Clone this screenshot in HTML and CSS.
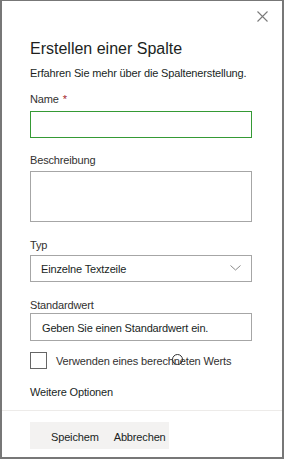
FILE: index.html
```html
<!DOCTYPE html>
<html lang="de">

<head>
    <meta charset="UTF-8">
    <meta name="viewport" content="width=device-width, initial-scale=1.0">
    <title>Erstellen einer Spalte</title>

    <link rel="stylesheet" href="styles.css">
</head>

<body>
    <div class="panel">
        <div class="panel-header">
            <button class="close" aria-label="Schließen">
                <svg width="11" height="11" viewBox="0 0 11 11">
                    <path d="M0.5 0.5 L10.5 10.5 M10.5 0.5 L0.5 10.5" stroke="#7a7a7a" stroke-width="1.1" fill="none" />
                </svg>
            </button>
        </div>

        <div class="panel-body">
            <h1 class="title">Erstellen einer Spalte</h1>
            <p class="intro">Erfahren Sie mehr über die Spaltenerstellung.</p>

            <!-- Name -->
            <label class="field-label label-name">Name <span class="required">*</span></label>
            <div class="input input-focus"></div>

            <!-- Beschreibung -->
            <label class="field-label label-desc">Beschreibung</label>
            <div class="textarea"></div>

            <!-- Typ -->
            <label class="field-label label-type">Typ</label>
            <div class="select">
                <span>Einzelne Textzeile</span>
                <svg width="11" height="6" viewBox="0 0 11 6">
                    <path d="M0.5 0.5 L5.5 5 L10.5 0.5" stroke="#8a8a8a" stroke-width="1" fill="none" />
                </svg>
            </div>

            <!-- Standardwert -->
            <label class="field-label label-default">Standardwert</label>
            <div class="input input-default">Geben Sie einen Standardwert ein.</div>

            <div class="checkbox-row">
                <span class="checkbox"></span>
                <span class="checkbox-text">Verwenden eines berechneten Werts</span>
                <span class="cursor"></span>
            </div>

            <div class="more">Weitere Optionen</div>
        </div>

        <div class="panel-footer">
            <div class="buttons">
                <button class="btn">Speichem</button>
                <button class="btn">Abbrechen</button>
            </div>
        </div>
    </div>
</body>

</html>
```

FILE: styles.css
```css
* {
    box-sizing: border-box;
}

body {
    margin: 0;
    font-family: "Liberation Sans", Arial, sans-serif;
    color: #323130;
    background: #fff;
}

.panel {
    width: 284px;
    height: 459px;
    border: 2px solid #777;
    border-top-width: 1px;
    display: flex;
    flex-direction: column;
}

.panel-header {
    display: flex;
    justify-content: flex-end;
    padding: 10px 14px 0 0;
    height: 30px;
    flex: none;
}

.close {
    appearance: none;
    border: none;
    background: none;
    padding: 0;
    width: 11px;
    height: 11px;
    cursor: pointer;
}

.close svg {
    display: block;
}

.panel-body {
    padding: 0 30px 0 28px;
    height: 379px;
    flex: none;
}

.title {
    margin: 0;
    padding-top: 8px;
    font-size: 16px;
    font-weight: normal;
    line-height: 20px;
    color: #201f1e;
}

.intro {
    margin: 7px 0 0;
    font-size: 11px;
    line-height: 14px;
    letter-spacing: -0.15px;
    color: #201f1e;
    white-space: nowrap;
}

.field-label {
    display: block;
    font-size: 11px;
    line-height: 14px;
    letter-spacing: -0.15px;
}

.label-name {
    margin-top: 12px;
    margin-bottom: 5px;
}

.required {
    color: #a4262c;
    margin-left: 1px;
}

.label-desc {
    margin-top: 15px;
    margin-bottom: 4px;
}

.label-type {
    margin-top: 16px;
    margin-bottom: 3px;
}

.label-default {
    margin-top: 16px;
    margin-bottom: 1px;
}

.input {
    height: 27px;
    border: 1px solid #a6a6a6;
}

/* 获得焦点 */
.input-focus {
    border-color: #359a35;
}

.input-default {
    height: 28px;
    padding: 2px 0 0 11px;
    font-size: 11px;
    line-height: 24px;
    letter-spacing: -0.15px;
    color: #201f1e;
}

.textarea {
    height: 51px;
    border: 1px solid #a6a6a6;
}

.select {
    height: 27px;
    border: 1px solid #a6a6a6;
    display: flex;
    align-items: center;
    justify-content: space-between;
    padding: 1px 10px 0 10px;
    font-size: 11px;
    letter-spacing: -0.15px;
    color: #201f1e;
}

.select svg {
    display: block;
    margin-top: -2px;
}

.checkbox-row {
    display: flex;
    align-items: center;
    margin-top: 11px;
    position: relative;
}

.checkbox {
    width: 17px;
    height: 17px;
    border: 1.5px solid #666;
    margin-right: 9px;
    flex: none;
}

.checkbox-text {
    font-size: 11px;
    line-height: 14px;
    letter-spacing: -0.15px;
    white-space: nowrap;
}

/* 鼠标指针 */
.cursor {
    position: absolute;
    left: 142px;
    top: 2px;
    width: 11px;
    height: 11px;
    border: 1px solid #333;
    border-radius: 50%;
}

.more {
    margin-top: 16px;
    font-size: 11px;
    line-height: 14px;
    letter-spacing: -0.15px;
    color: #201f1e;
}

.panel-footer {
    border-top: 1px solid #edebe9;
    padding: 11px 0 0 28px;
    flex: 1;
}

.buttons {
    display: flex;
    align-items: center;
    width: 139px;
    height: 27px;
    padding: 3px 0 0 21px;
    gap: 15px;
    background: #f3f2f1;
}

.btn {
    appearance: none;
    border: none;
    background: none;
    padding: 0;
    font-family: inherit;
    font-size: 11px;
    letter-spacing: -0.15px;
    color: #201f1e;
    cursor: pointer;
}
```
